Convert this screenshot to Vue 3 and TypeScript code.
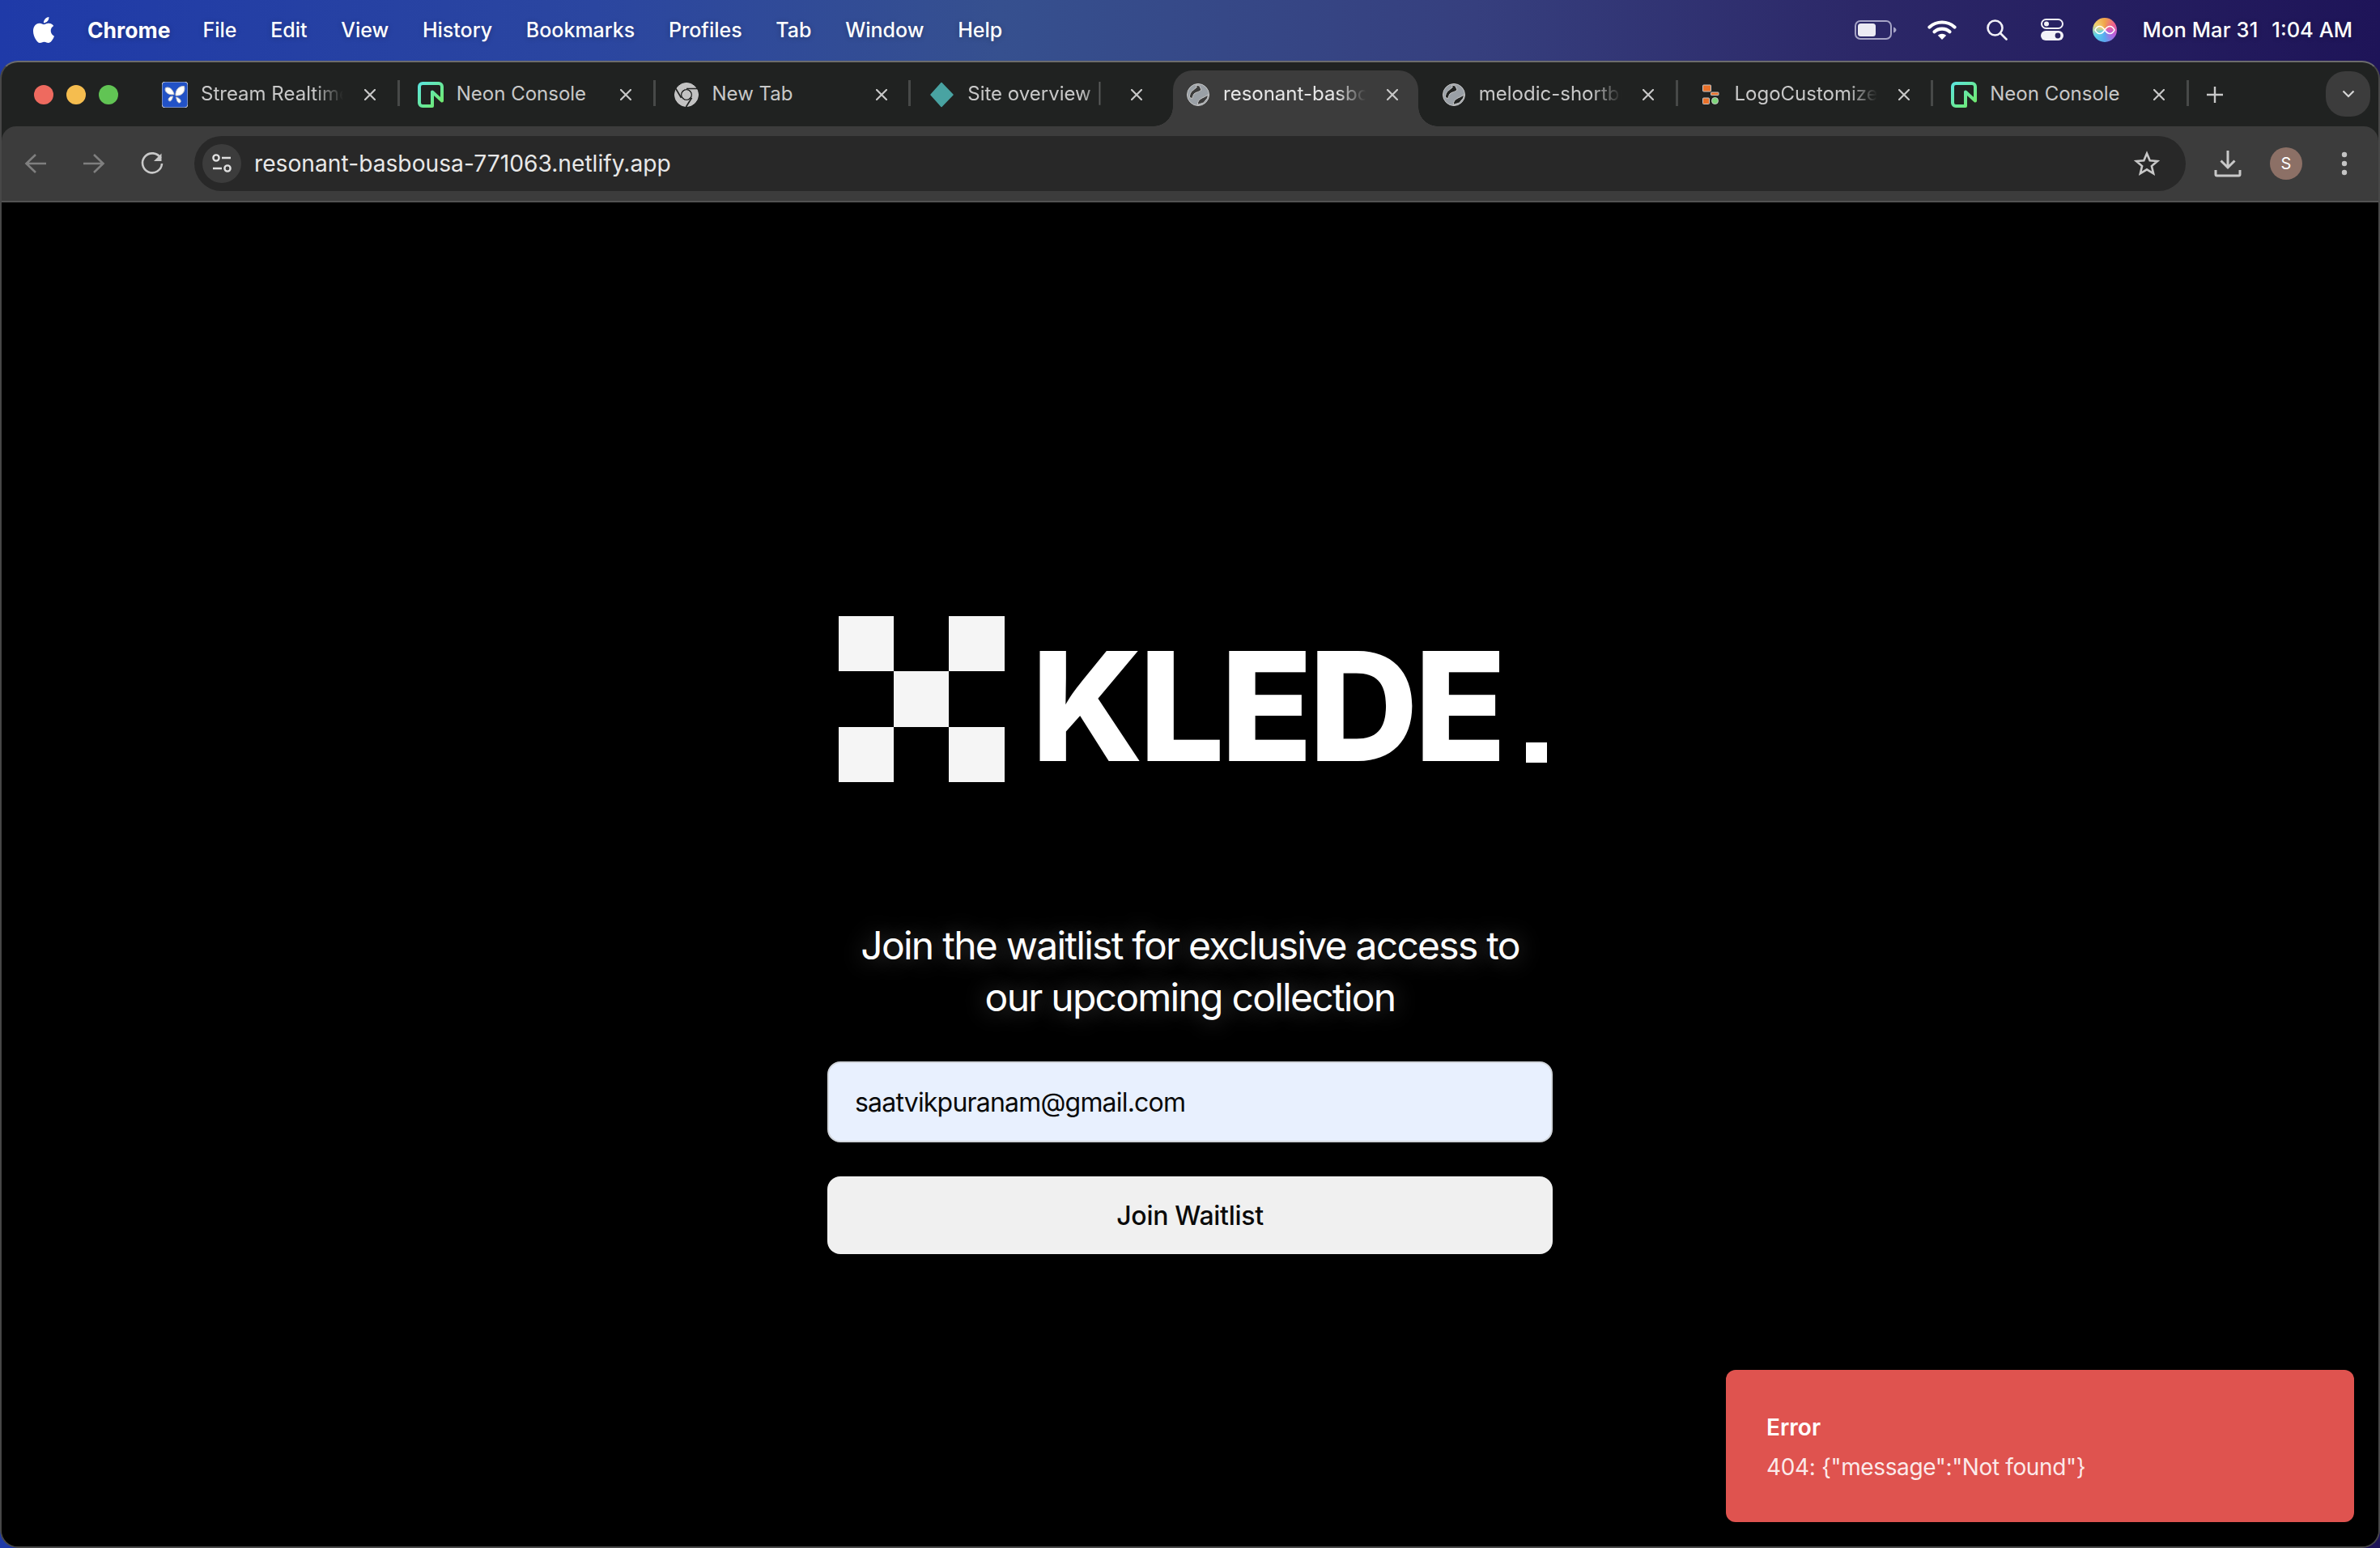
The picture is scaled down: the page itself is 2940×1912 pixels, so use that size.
<script setup lang="ts">
interface Tab {
  title: string
  icon: 'stream' | 'neon' | 'chrome' | 'diamond' | 'globe' | 'logo'
  fade?: boolean
  active?: boolean
  sep?: boolean
}
const menus: string[] = ['File', 'Edit', 'View', 'History', 'Bookmarks', 'Profiles', 'Tab', 'Window', 'Help']
const tabs: Tab[] = [
  { title: 'Stream Realtime', icon: 'stream', fade: true, sep: true },
  { title: 'Neon Console', icon: 'neon', sep: true },
  { title: 'New Tab', icon: 'chrome', sep: true },
  { title: 'Site overview | resonant', icon: 'diamond', fade: true },
  { title: 'resonant-basbousa', icon: 'globe', fade: true, active: true },
  { title: 'melodic-shortbread', icon: 'globe', fade: true, sep: true },
  { title: 'LogoCustomizer', icon: 'logo', fade: true, sep: true },
  { title: 'Neon Console', icon: 'neon', sep: true },
]
</script>

<template>
  <div class="desktop">
    <header class="menubar">
      <svg class="apple" viewBox="0 0 24 24" fill="#fff"><path d="M12.152 6.896c-.948 0-2.415-1.078-3.96-1.04-2.04.027-3.91 1.183-4.961 3.014-2.117 3.675-.546 9.103 1.519 12.09 1.013 1.454 2.208 3.09 3.792 3.039 1.52-.065 2.09-.987 3.935-.987 1.831 0 2.35.987 3.96.948 1.637-.026 2.676-1.48 3.676-2.948 1.156-1.688 1.636-3.325 1.662-3.415-.039-.013-3.182-1.221-3.22-4.857-.026-3.04 2.48-4.494 2.597-4.559-1.429-2.09-3.623-2.324-4.39-2.376-2-.156-3.675 1.09-4.61 1.09zM15.53 3.83c.843-1.012 1.4-2.427 1.245-3.83-1.207.052-2.662.805-3.532 1.818-.78.896-1.454 2.338-1.273 3.714 1.338.104 2.715-.688 3.559-1.701"/></svg>
      <span class="menu-app">Chrome</span>
      <nav class="menu-items"><span v-for="m in menus" :key="m">{{ m }}</span></nav>
      <div class="tray">
        <svg class="t-battery" viewBox="0 0 52 24"><rect x="1" y="1" width="44" height="22" rx="6" fill="none" stroke="#a6a4c6" stroke-width="2"/><rect x="4" y="4" width="22" height="16" rx="3.500" fill="#ecebf3"/><path d="M48 8.500c2 .6 3.500 2 3.500 3.500s-1.500 2.900-3.500 3.500z" fill="#a6a4c6"/></svg>
        <svg class="t-wifi" viewBox="0 0 36 26" fill="none" stroke="#fff" stroke-linecap="round"><path d="M2.500 9.500C11 1.500 25 1.500 33.500 9.500" stroke-width="4.200"/><path d="M8.500 15.200C13.500 10.300 22.500 10.300 27.500 15.200" stroke-width="4.200"/><path d="M12.800 19.800L18 25l5.200-5.200c-3-2.800-7.400-2.800-10.400 0z" fill="#fff" stroke="none"/></svg>
        <svg class="t-search" viewBox="0 0 26 26" fill="none" stroke="#f2f1f7" stroke-width="2.600" stroke-linecap="round"><circle cx="10.500" cy="10.500" r="9"/><path d="M17 17l7.500 7.500"/></svg>
        <svg class="t-toggle" viewBox="0 0 28 28"><rect x="1" y="1" width="26" height="11" rx="5.500" fill="none" stroke="#f2f1f7" stroke-width="2"/><circle cx="7" cy="6.500" r="3" fill="#f2f1f7"/><rect y="15" width="28" height="12" rx="6" fill="#f2f1f7"/><circle cx="21" cy="21" r="3.400" fill="#2a2462"/></svg>
        <span class="t-siri"><svg viewBox="0 0 30 30" fill="none" stroke="#fff" stroke-width="1.600"><path d="M3 15c3-6 8-6 12 0s9 6 12 0c-3-6-8-6-12 0s-9 6-12 0z"/></svg></span>
        <span class="t-date">Mon Mar 31</span>
        <span class="t-time">1:04 AM</span>
      </div>
    </header>

    <div class="window">
      <div class="tabstrip">
        <div class="lights"><i class="red"></i><i class="yellow"></i><i class="green"></i></div>
        <div
          v-for="(t, i) in tabs"
          :key="i"
          class="tab"
          :class="{ active: t.active, sep: t.sep }"
        >
          <span v-if="t.active" class="tab-bg"></span>
          <svg class="favicon" viewBox="0 0 32 32">
            <template v-if="t.icon === 'stream'">
              <rect width="32" height="32" rx="4" fill="#2252c6"/>
              <path d="M15 15.500C13.500 9 8.500 5.500 4.500 7.500 2.500 12 8 17 15 15.500z" fill="#fff"/>
              <path d="M17 17C16.500 10 21 5 27.500 5.500 29.500 12 24.500 18 17 17z" fill="#fff"/>
              <path d="M13.500 18c-2.500 0-5.500 1.500-5.500 4 0 2 2.500 2.500 3.500 1 1-1.200 1.500-3 2-5z" fill="#fff"/>
              <path d="M17.500 19c.8 3 1.500 7 4 7 2 0 2.200-2.500 1-4-1-1.500-3-2.500-5-3z" fill="#fff"/>
            </template>
            <template v-else-if="t.icon === 'neon'">
              <defs>
                <linearGradient :id="'neon-grad-' + i" x1="0" y1="0" x2="1" y2="1">
                  <stop offset="0" stop-color="#5ce5dc"/>
                  <stop offset="1" stop-color="#72ea66"/>
                </linearGradient>
              </defs>
              <path d="M18 30H6A4 4 0 0 1 2 26V6A4 4 0 0 1 6 2h20A4 4 0 0 1 30 6v17.500L18 12.500z" fill="none" :stroke="'url(#neon-grad-' + i + ')'" stroke-width="4" stroke-linejoin="round"/>
            </template>
            <template v-else-if="t.icon === 'chrome'">
              <circle cx="16" cy="16" r="14.500" fill="#c2c2c2"/>
              <circle cx="16" cy="16" r="7.500" fill="#202221"/>
              <circle cx="16" cy="16" r="5.200" fill="#c2c2c2"/>
              <path d="M16 8.500h14M9.500 19.800L2.800 8.500M22.500 19.800L15.500 31" stroke="#202221" stroke-width="1.700"/>
            </template>
            <template v-else-if="t.icon === 'diamond'">
              <path d="M16 1.500L30 16 16 30.500 3 16z" fill="#49a3a2" stroke="#49a3a2" stroke-width="1.500" stroke-linejoin="round"/>
            </template>
            <template v-else-if="t.icon === 'globe'">
              <circle cx="17" cy="16" r="13.500" fill="#9aa0a6"/>
              <g :fill="t.active ? '#3c3c3c' : '#202221'">
                <path d="M6.300 19.300C6.500 15.500 8 13 9.500 11.500 11 10 13.500 8.500 15.300 6.700L14.300 4 18.700 5 21 10C19.500 11.500 18 12 16.300 12.700 14.500 13.200 13 14 12 15 11 16.300 10.300 18.500 9.700 20.700z"/>
                <path d="M16.300 28.300C16.300 26.500 16.800 24.800 17.700 23.300 19 21.800 20.500 21 22 20 24.500 19 27 17.800 29.300 16L28.700 20 23.700 26z"/>
              </g>
            </template>
            <template v-else>
              <rect x="8.500" y="4" width="10" height="8" rx="1" fill="#e8712a"/>
              <rect x="18.500" y="13" width="9.500" height="3.600" rx=".6" fill="#e8712a"/>
              <rect x="8.500" y="20" width="8" height="7.500" rx="1" fill="#e8712a"/>
              <circle cx="23.500" cy="23.500" r="4" fill="#7dd77a"/>
            </template>
          </svg>
          <span class="tab-title" :class="{ fade: t.fade }">{{ t.title }}</span>
          <svg class="tab-close" viewBox="0 0 14 14" fill="none" stroke-width="2.200" stroke-linecap="round"><path d="M1 1l12 12M13 1L1 13"/></svg>
        </div>
        <svg class="tab-plus" viewBox="0 0 22 22" fill="none" stroke="#c8c8c8" stroke-width="2.400"><path d="M11 1v20M1 11h20"/></svg>
        <div class="tab-list">
          <svg viewBox="0 0 16 10" fill="none" stroke="#d6d6d6" stroke-width="2.200"><path d="M1.500 1.500L8 8l6.500-6.500"/></svg>
        </div>
      </div>

      <div class="toolbar">
        <svg class="tool" viewBox="0 0 40 40" fill="none" stroke="#7f7f7f" stroke-width="2.600"><path d="M33 20H9M20 9L8.500 20 20 31"/></svg>
        <svg class="tool" viewBox="0 0 40 40" fill="none" stroke="#7f7f7f" stroke-width="2.600"><path d="M7 20h24M20 9l11.500 11L20 31"/></svg>
        <svg class="tool" viewBox="0 0 40 40" fill="none" stroke="#c8c8c8" stroke-width="2.600"><path d="M30.500 13.500A12 12 0 1 0 32 20"/><path d="M31.500 7.500v9.500h-9.500z" fill="#c8c8c8" stroke="none"/></svg>
        <div class="address">
          <span class="chip">
            <svg viewBox="0 0 28 28" fill="none" stroke="#e0e0e0" stroke-width="2.400"><circle cx="7" cy="7" r="3.600"/><path d="M14 7h11M3 20h11"/><circle cx="21" cy="20" r="3.600"/></svg>
          </span>
          <span class="url">resonant-basbousa-771063.netlify.app</span>
          <svg class="star" viewBox="0 0 32 32" fill="none" stroke="#c8c8c8" stroke-width="2.600" stroke-linejoin="miter"><path d="M16 3.500l3.700 8.700 9.300.8-7.100 6.100 2.200 9.200-8.100-5-8.100 5 2.200-9.200L3 13l9.300-.8z"/></svg>
        </div>
        <svg class="tool" viewBox="0 0 40 40" fill="none" stroke="#c8c8c8" stroke-width="3"><path d="M20 4v21M11.500 16.500L20 25l8.500-8.500"/><path d="M5 28v5.500a1.500 1.500 0 0 0 1.500 1.500h27a1.500 1.500 0 0 0 1.500-1.500V28"/></svg>
        <span class="avatar">S</span>
        <svg class="tool" viewBox="0 0 40 40" fill="#c4c4c4"><circle cx="20" cy="9" r="3.200"/><circle cx="20" cy="20" r="3.200"/><circle cx="20" cy="31" r="3.200"/></svg>
      </div>

      <main class="page">
        <div class="column">
          <div class="logo">
            <svg class="logo-mark" viewBox="0 0 3 3" fill="#f5f5f5" shape-rendering="crispEdges">
              <rect x="0" y="0" width="1" height="1"/>
              <rect x="2" y="0" width="1" height="1"/>
              <rect x="1" y="1" width="1" height="1"/>
              <rect x="0" y="2" width="1" height="1"/>
              <rect x="2" y="2" width="1" height="1"/>
            </svg>
            <span class="logo-word">KLEDE<i class="logo-dot"></i></span>
          </div>
          <h1 class="headline">Join the waitlist for exclusive access to<br />our upcoming collection</h1>
          <input class="email" type="email" value="saatvikpuranam@gmail.com" readonly />
          <button class="join" type="button">Join Waitlist</button>
        </div>
        <aside class="toast">
          <div class="toast-title">Error</div>
          <div class="toast-body">404: {"message":"Not found"}</div>
        </aside>
      </main>
    </div>
  </div>
</template>

<style scoped>
.desktop {
  width: 2940px;
  height: 1912px;
  display: flex;
  flex-direction: column;
  overflow: hidden;
  background: linear-gradient(90deg, #1f3aa8 0%, #2b46a0 25%, #36508f 42%, #363f7e 62%, #2c2868 78%, #1e1458 100%);
  font-family: Inter, "Liberation Sans", sans-serif;
}
.menubar {
  height: 75px;
  flex: none;
  display: flex;
  align-items: center;
  padding: 0 34px 2px 38px;
  box-sizing: border-box;
  color: #fff;
  font-size: 25px;
  font-weight: 500;
  text-shadow: 0 1px 6px rgba(0, 0, 0, 0.25);
}
.apple { width: 32px; height: 32px; margin-right: 38px; }
.menu-app { font-size: 26.500px; font-weight: 700; margin-right: 40px; }
.menu-items { display: flex; gap: 41.700px; }
.tray { margin-left: auto; display: flex; align-items: center; font-size: 25.500px; }
.t-battery { width: 52px; height: 24px; margin-right: 38px; }
.t-wifi { width: 36px; height: 26px; margin-right: 37px; }
.t-search { width: 26px; height: 26px; margin-right: 41px; }
.t-toggle { width: 28px; height: 28px; margin-right: 36px; }
.t-siri {
  width: 30px;
  height: 30px;
  border-radius: 50%;
  margin-right: 32px;
  background: conic-gradient(#f0a44a, #ee5f8f, #b760e0, #5aa8f0, #59d0e8, #f0d070, #f0a44a);
  display: flex;
}
.t-date { margin-right: 17px; letter-spacing: 0.1px; }
.window {
  flex: 1;
  min-height: 0;
  display: flex;
  flex-direction: column;
  background: #202221;
  border: 2px solid #474747;
  border-top-color: #6c6c6c;
  border-radius: 22px;
  overflow: hidden;
  box-sizing: border-box;
}
.tabstrip {
  height: 79px;
  flex: none;
  display: flex;
  align-items: center;
  color: #c8c8c8;
  font-size: 24px;
}
.lights { display: flex; gap: 16px; padding-left: 40px; width: 134px; box-sizing: content-box; flex: none; }
.lights i { width: 24px; height: 24px; border-radius: 50%; display: block; }
.red { background: #ee6a5f; }
.yellow { background: #f5bd4f; }
.green { background: #61c454; }
.tab {
  position: relative;
  width: 315.750px;
  height: 100%;
  flex: none;
  display: flex;
  align-items: center;
  padding-left: 24px;
  box-sizing: border-box;
  stroke: #c8c8c8;
}
.tab.sep::after {
  content: "";
  position: absolute;
  right: -2px;
  top: 22px;
  width: 3px;
  height: 32px;
  background: #474948;
}
.tab-bg {
  position: absolute;
  left: 10px;
  right: 3px;
  top: 10px;
  bottom: 0;
  background: #3c3c3c;
  border-radius: 24px 24px 0 0;
}
.tab-bg::before,
.tab-bg::after {
  content: "";
  position: absolute;
  bottom: 0;
  width: 24px;
  height: 24px;
}
.tab-bg::before { left: -24px; background: radial-gradient(circle at 0 0, transparent 23.500px, #3c3c3c 24px); }
.tab-bg::after { right: -24px; background: radial-gradient(circle at 100% 0, transparent 23.500px, #3c3c3c 24px); }
.favicon { position: relative; width: 32px; height: 32px; flex: none; margin-right: 16px; }
.tab-title {
  position: relative;
  width: 176px;
  flex: none;
  white-space: nowrap;
  overflow: hidden;
  line-height: 36px;
  margin-top: -2px;
}
.tab-title.fade {
  -webkit-mask-image: linear-gradient(90deg, #000 calc(100% - 36px), transparent);
  mask-image: linear-gradient(90deg, #000 calc(100% - 36px), transparent);
}
.active .tab-title { color: #e6e6e6; }
.tab-close { position: relative; width: 14px; height: 14px; margin-left: 26px; flex: none; }
.tab-plus { width: 22px; height: 22px; margin-left: 23px; flex: none; }
.tab-list {
  margin-left: auto;
  margin-right: 10px;
  margin-top: -2px;
  width: 55px;
  height: 56px;
  background: #3c3c3c;
  border-radius: 24px;
  display: flex;
  align-items: center;
  justify-content: center;
}
.tab-list svg { width: 16px; height: 10px; }
.toolbar {
  height: 94px;
  flex: none;
  display: flex;
  align-items: center;
  gap: 32px;
  padding: 0 22px;
  background: #3c3c3c;
  border-bottom: 2px solid #525252;
  border-radius: 18px 18px 0 0;
  box-sizing: border-box;
}
.tool { width: 40px; height: 40px; flex: none; }
.address {
  flex: 1;
  height: 68px;
  display: flex;
  align-items: center;
  padding: 0 32px 0 10px;
  background: #282828;
  border-radius: 34px;
}
.chip {
  width: 48px;
  height: 48px;
  border-radius: 50%;
  background: #3c3c3c;
  display: flex;
  align-items: center;
  justify-content: center;
  margin-right: 16px;
}
.chip svg { width: 28px; height: 28px; }
.url { color: #e8e8e8; font-size: 28.200px; }
.star { width: 32px; height: 32px; margin-left: auto; }
.avatar {
  width: 40px;
  height: 40px;
  border-radius: 50%;
  background: #8c7066;
  color: #fff;
  font-size: 20px;
  display: flex;
  align-items: center;
  justify-content: center;
  flex: none;
}
.page {
  position: relative;
  flex: 1;
  min-height: 0;
  background: #000;
  display: flex;
  justify-content: center;
  padding-top: 511px;
  box-sizing: border-box;
}
.column { width: 896px; display: flex; flex-direction: column; align-items: stretch; }
.logo { display: flex; align-items: flex-start; margin-left: 13px; height: 205px; }
.logo-mark { width: 206px; height: 205px; flex: none; }
.logo-word {
  margin-left: 33px;
  margin-top: 21px;
  color: #fff;
  font-size: 187px;
  font-weight: 800;
  line-height: 180px;
  letter-spacing: -5px;
  white-space: nowrap;
}
.logo-dot {
  display: inline-block;
  width: 26px;
  height: 25px;
  margin-left: 28.500px;
  margin-bottom: -2px;
  background: #fff;
}
.headline {
  margin: 170px 0 0;
  color: #fff;
  font-size: 48px;
  line-height: 64px;
  font-weight: 400;
  letter-spacing: -1.750px;
  text-align: center;
  white-space: nowrap;
  text-shadow: 0 0 30px rgba(255, 255, 255, 0.32);
}
.email {
  margin-top: 47px;
  height: 100px;
  box-sizing: border-box;
  padding: 0 32px;
  border: 2px solid #d1d5db;
  border-radius: 16px;
  background: #e8f0fe;
  color: #0a0a0a;
  font-family: inherit;
  font-size: 32px;
  letter-spacing: -0.800px;
  outline: none;
}
.join {
  margin-top: 42px;
  height: 96px;
  border: none;
  border-radius: 16px;
  background: #f0f0f0;
  color: #0a0a0a;
  font-family: inherit;
  font-size: 32px;
  font-weight: 500;
  letter-spacing: -0.300px;
  padding: 0;
}
.toast {
  position: absolute;
  right: 30px;
  bottom: 30px;
  width: 776px;
  height: 188px;
  box-sizing: border-box;
  padding: 47px 50px;
  background: #df534f;
  border-radius: 12px;
  color: #fff;
  font-size: 28px;
  line-height: 48px;
}
.toast-title { font-weight: 600; line-height: 49px; }
.toast-body { color: rgba(255, 255, 255, 0.9); letter-spacing: -0.370px; }
</style>

<style>
html, body { margin: 0; background: #000; }
</style>
